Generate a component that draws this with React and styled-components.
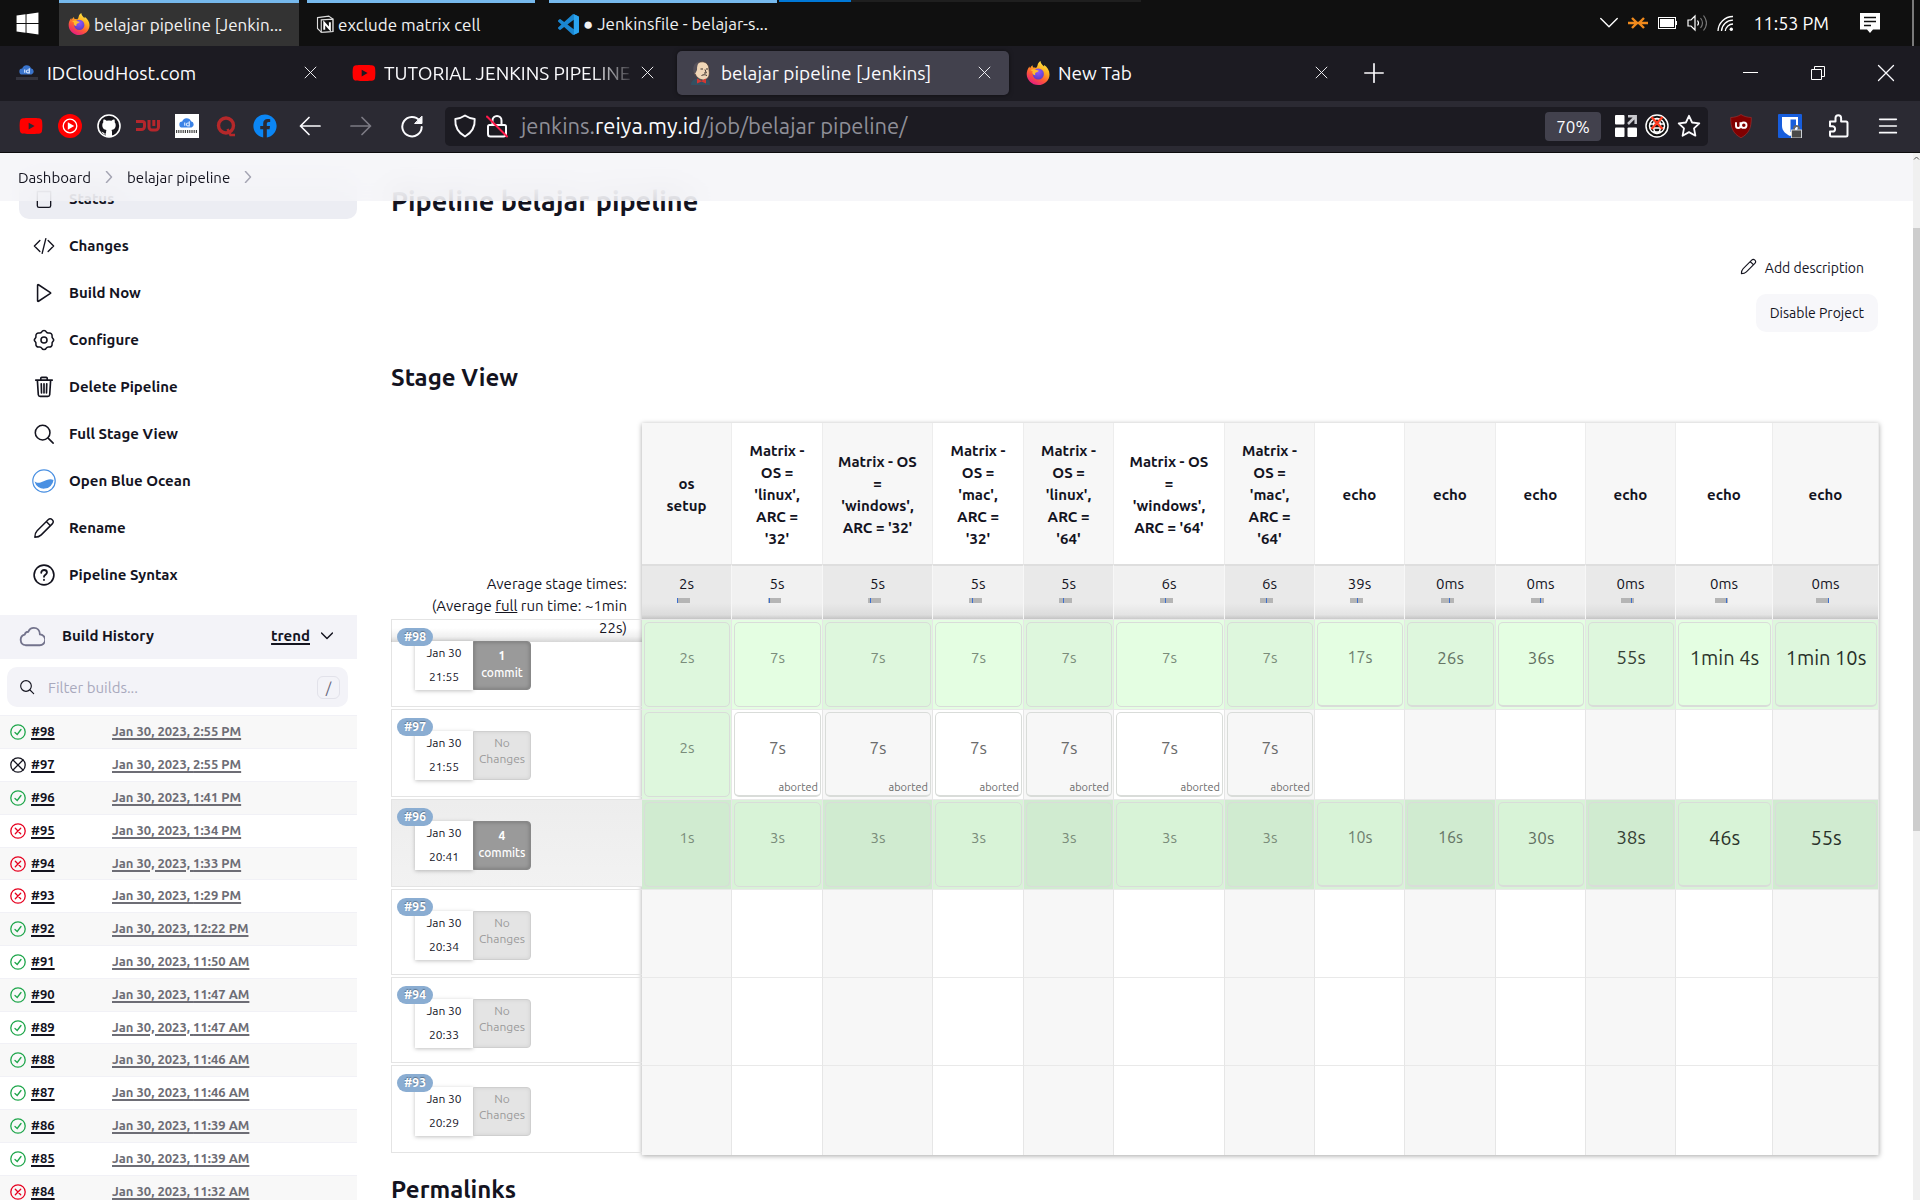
import React from 'react';
import styled, { createGlobalStyle, css } from 'styled-components';
import { FaWindows, FaYoutube, FaFacebook } from 'react-icons/fa';

const GlobalStyle = createGlobalStyle`
  * { box-sizing: border-box; }
  body {
    margin: 0;
    font-family: Ubuntu, "Noto Sans", "Open Sans", sans-serif;
    font-size: 15px;
    color: #14141f;
    background: #fff;
  }
  button { font: inherit; color: inherit; background: none; border: 0; padding: 0; cursor: pointer; }
  svg { display: block; flex: none; }
  h1, h2, ul { margin: 0; padding: 0; }
  ul { list-style: none; }
  a { color: inherit; text-decoration: none; }
`;

const Screen = styled.div`
  height: 100vh;
  display: flex;
  flex-direction: column;
  overflow: hidden;
`;

/* ---------- Desktop task bar ---------- */

const TaskBar = styled.div`
  display: flex;
  height: 46px;
  background: #101010;
  color: #fff;
  font-size: 17px;
`;
const StartButton = styled.button`
  width: 59px;
  display: grid;
  place-items: center;
  padding-right: 5px;
`;
const Task = styled.button`
  width: ${p => p.$width}px;
  margin-right: ${p => p.$gap}px;
  display: flex;
  align-items: center;
  gap: 4px;
  padding: 0 8px 1px 9px;
  border-top: 3px solid #76b9ed;
  background: ${p => (p.$active ? '#333' : 'transparent')};
  overflow: hidden;
  white-space: nowrap;
  color: #f2f2f2;
`;
const TaskProgress = styled.div`
  width: 362px;
  height: 2px;
  background: linear-gradient(to right, #0078d7 20%, #1f1f1f 20%);
`;
const Tray = styled.div`
  margin-left: auto;
  display: flex;
  align-items: center;
  gap: 10px;
  padding-right: 32px;
`;
const Clock = styled.span`
  margin: 0 21px 0 9px;
  font-size: 18px;
`;
const DesktopEdge = styled.div`
  width: 8px;
  border-left: 2px solid #7a7a7a;
`;

/* ---------- Browser chrome ---------- */

const TabStrip = styled.div`
  display: flex;
  align-items: center;
  height: 55px;
  gap: 5px;
  padding: 0 0 1px 3px;
  background: #1c1b22;
  color: #fbfbfe;
`;
const Tab = styled.div`
  width: 332px;
  height: 44px;
  display: flex;
  align-items: center;
  padding: 0 11px 1px 12px;
  border-radius: 5px;
  font-size: 19px;
  ${p => p.$active && css`
    background: #42414d;
    box-shadow: 0 0 4px rgba(0, 0, 0, 0.5);
  `}
`;
const TabTitle = styled.span`
  flex: 1;
  margin: 0 -4px 0 8px;
  overflow: hidden;
  white-space: nowrap;
  ${p => p.$fade && css`mask-image: linear-gradient(to left, transparent, #000 44px);`}
`;
const CloseButton = styled.button`
  width: 28px;
  height: 28px;
  display: grid;
  place-items: center;
`;
const NewTab = styled.button`
  width: 46px;
  height: 44px;
  display: grid;
  place-items: center;
`;
const WindowButtons = styled.div`
  margin-left: auto;
  display: flex;
`;
const WindowButton = styled.button`
  width: 68px;
  height: 44px;
  display: grid;
  place-items: center;
`;

const ToolBar = styled.div`
  display: flex;
  align-items: center;
  height: 52px;
  padding: 0 8px 1px 11px;
  background: #2b2a33;
  color: #fbfbfe;
  border-bottom: 1px solid #0c0c0d;
`;
const IconButton = styled.button`
  width: ${p => p.$width}px;
  height: 40px;
  display: grid;
  place-items: center;
`;
const UrlBar = styled.div`
  flex: 1;
  height: 39px;
  margin: 0 8px;
  display: flex;
  align-items: center;
  gap: 8px;
  padding: 0 7px 0 8px;
  border-radius: 5px;
  background: #1c1b22;
`;
const Address = styled.div`
  flex: 1;
  font-size: 22px;
  line-height: 30px;
  color: #8f8f98;
  white-space: nowrap;
  padding-left: 4px;
  b { font-weight: 400; color: #fbfbfe; }
`;
const ZoomLevel = styled.button`
  height: 29px;
  width: 56px;
  margin-right: 6px;
  border-radius: 4px;
  background: #42414d;
  font-size: 17px;
`;

/* ---------- Page ---------- */

const Viewport = styled.div`
  flex: 1;
  min-height: 0;
  display: flex;
`;
const Page = styled.div`
  flex: 1;
  min-width: 0;
  overflow: hidden;
`;
const ScrollBar = styled.div`
  width: 7px;
  background: #f0f0f0;
  display: flex;
  flex-direction: column;
`;
const ScrollArrow = styled.div`
  height: 75px;
  padding-top: 3px;
`;
const ScrollThumb = styled.div`
  height: 603px;
  background: #cdcdcd;
`;

const Breadcrumbs = styled.nav`
  position: sticky;
  top: 0;
  z-index: 5;
  display: flex;
  align-items: center;
  gap: 12px;
  height: 48px;
  padding: 0 18px;
  color: #14141f;
  background: rgba(244, 244, 247, 0.8);
  backdrop-filter: blur(15px);
  svg { color: #a5a5b3; }
`;
const Body = styled.div`
  display: grid;
  grid-template-columns: 357px minmax(0, 1fr);
  gap: 34px;
  margin-top: -23px;
  padding-right: 35px;
`;

const TaskList = styled.ul`
  padding-left: 19px;
  display: flex;
  flex-direction: column;
  gap: 6px;
`;
const TaskLink = styled.a`
  display: flex;
  align-items: center;
  gap: 13px;
  height: 41px;
  padding: 0 13px;
  border-radius: 10px;
  font-weight: 600;
  background: ${p => (p.$active ? '#ecedf3' : 'transparent')};
`;

const HistoryHeader = styled.div`
  display: flex;
  align-items: center;
  height: 44px;
  margin-top: 20px;
  padding: 0 24px 3px 19px;
  background: #f3f3f8;
  font-weight: 600;
  a { margin-left: auto; text-decoration: underline; text-decoration-thickness: 2px; text-underline-offset: 2px; }
`;
const HistoryTitle = styled.h2`
  font-size: 15px;
  font-weight: 600;
  margin-left: 17px;
`;
const TrendToggle = styled.button`
  margin-left: 11px;
`;
const Search = styled.label`
  display: flex;
  align-items: center;
  gap: 13px;
  height: 40px;
  margin: 8px 9px 8px 7px;
  padding: 0 8px 0 12px;
  border-radius: 10px;
  background: #f3f3f8;
  input {
    flex: 1;
    min-width: 0;
    border: 0;
    outline: 0;
    padding: 0;
    background: none;
    font: inherit;
  }
  input::placeholder { color: #a9a9bd; opacity: 1; }
`;
const Key = styled.kbd`
  width: 23px;
  height: 23px;
  display: grid;
  place-items: center;
  border: 1px solid #e2e2ea;
  border-radius: 6px;
  font: inherit;
  color: #66667a;
`;

const BuildTable = styled.table`
  width: 100%;
  border-collapse: collapse;
`;
const BuildRow = styled.tr`
  height: 33px;
  border-top: 1px solid #f1f1f6;
  &:nth-child(odd) { background: #f8f8f8; }
  &:nth-child(5n) { height: 32px; }
`;
const BuildCell = styled.td`
  padding: 0 0 0 ${p => p.$indent}px;
  width: ${p => p.$width};
  font-size: 13px;
  line-height: 18px;
  color: ${p => p.$color};
  a {
    display: inline-block;
    padding-bottom: 2px;
    font-weight: ${p => p.$weight};
    text-decoration: underline;
    text-decoration-thickness: 2px;
    text-underline-offset: 2px;
  }
`;
const BuildName = styled.div`
  display: flex;
  align-items: center;
  gap: 5px;
`;

const Title = styled.h1`
  font-size: 27px;
  line-height: 46px;
  font-weight: 700;
`;
const Actions = styled.div`
  display: flex;
  flex-direction: column;
  align-items: flex-end;
  gap: 16px;
  margin-top: 34px;
`;
const AddDescription = styled.a`
  display: flex;
  align-items: center;
  gap: 8px;
  height: 20px;
  padding-right: 14px;
  font-size: 14px;
  svg { margin-bottom: 4px; }
`;
const DisableButton = styled.button`
  height: 38px;
  padding: 0 14px;
  border-radius: 10px;
  background: #f7f7fa;
  font-size: 14px;
`;
const Heading = styled.h2`
  font-size: 24px;
  line-height: 30px;
  font-weight: 700;
  margin-top: ${p => p.$top}px;
`;

const StageView = styled.section`
  display: grid;
  grid-template-columns: 251px minmax(0, 1fr);
  margin-top: 30px;
`;
const RunColumn = styled.div`
  position: relative;
`;
const AverageLabel = styled.div`
  position: absolute;
  top: 141px;
  left: 0;
  right: 0;
  height: 78px;
  padding: 9px 15px 0 32px;
  text-align: right;
  line-height: 22px;
  background: linear-gradient(to bottom, transparent 82%, rgba(0, 0, 0, 0.06) 93%, rgba(0, 0, 0, 0.16));
`;
const RunList = styled.ul`
  margin-top: 196px;
`;
const Run = styled.li`
  height: ${p => p.$height - 2}px;
  margin-bottom: 2px;
  padding: 8px 0 0 5px;
  border: 1px solid #e4e4e4;
  border-right: 0;
  background: ${p => (p.$hover ? 'linear-gradient(#ededed, #f2f2f2)' : 'transparent')};
`;
const Badge = styled.a`
  position: relative;
  z-index: 2;
  display: block;
  width: 36px;
  height: 18px;
  border-radius: 9px;
  background: #8aadd2;
  color: #fff;
  font-size: 12px;
  font-weight: 700;
  line-height: 18px;
  text-align: center;
  text-shadow: 0 -1px 1px rgba(0, 0, 0, 0.35);
`;
const RunInfo = styled.div`
  position: relative;
  z-index: 1;
  display: flex;
  width: 116px;
  height: 49px;
  margin: -5px 0 0 18px;
`;
const RunDate = styled.div`
  width: 58px;
  line-height: 24px;
  font-size: 12px;
  text-align: center;
  background: #fff;
  box-shadow: 0 1px 4px rgba(0, 0, 0, 0.25);
`;
const Commits = styled.div`
  width: 58px;
  padding-top: 5px;
  border-radius: 0 4px 4px 0;
  font-size: 12px;
  line-height: 17px;
  text-align: center;
  color: ${p => (p.$filled ? '#fff' : '#9b9b9b')};
  font-weight: ${p => (p.$filled ? 500 : 400)};
  background: ${p => (p.$filled ? '#9a9a9a' : '#e4e4e4')};
  border: 1px solid ${p => (p.$filled ? '#888' : '#cfcfcf')};
  box-shadow: inset 0 0 4px rgba(0, 0, 0, ${p => (p.$filled ? 0.25 : 0.08)});
  ${p => !p.$filled && css`padding-top: 3px; line-height: 16px;`}
`;

const StageTable = styled.table`
  width: 100%;
  table-layout: fixed;
  border-collapse: separate;
  border-spacing: 0;
  text-align: center;
  box-shadow: 0 1px 5px rgba(0, 0, 0, 0.35);
`;
const StageHead = styled.th`
  height: 141px;
  padding: 2px 0 0;
  line-height: 22px;
  font-weight: 700;
  white-space: pre-line;
  border-right: 1px solid #ededed;
  background: #fff;
  &:nth-child(odd) { background: #f7f7f7; }
`;
const Average = styled.td`
  height: 55px;
  padding: 8px 0 0;
  vertical-align: top;
  line-height: 20px;
  border-top: 2px solid #dedede;
  border-right: 1px solid #f7f7f7;
  background: linear-gradient(to bottom, #f1f1f1 70%, #e4e4e4 92%, #c9c9c9);
  &:nth-child(odd) { background: linear-gradient(to bottom, #e9e9e9 70%, #dcdcdc 92%, #c4c4c4); }
  svg { margin: 4px auto 0; transform: translateX(-3px); }
`;
const tones = {
  success: ['#e4fee2', '#def7dd'],
  hovered: ['#d8f3d7', '#d0ebd0'],
  plain: ['#ffffff', '#f7f7f7'],
};
const StageCell = styled.td`
  height: ${p => p.$height}px;
  padding: 2px 1px 2px 2px;
  border-top: 1px solid #e9e9e9;
  border-right: 1px solid #e6e6e6;
  background: ${p => tones[p.$tone][0]};
  &:nth-child(odd) { background: ${p => tones[p.$tone][1]}; }
`;
const StageBox = styled.div`
  height: 85px;
  display: flex;
  flex-direction: column;
  justify-content: center;
  position: relative;
  padding-bottom: 14px;
  border: 1px solid #d9dcd9;
  border-bottom-width: ${p => (p.$size > 15 ? 2 : 1)}px;
  border-radius: 5px;
  white-space: nowrap;
  font-size: ${p => p.$size}px;
  color: ${p => p.$color};
`;
const Aborted = styled.span`
  position: absolute;
  right: 2px;
  bottom: 0;
  font-size: 11px;
  line-height: 15px;
`;

/* ---------- Icons ---------- */

const Line = ({ size = 20, w = 1.6, box = 24, children }) => (
  <svg width={size} height={size} viewBox={`0 0 ${box} ${box}`} fill="none" stroke="currentColor"
    strokeWidth={w} strokeLinecap="round" strokeLinejoin="round" aria-hidden="true">{children}</svg>
);

const Firefox = ({ size = 22, id }) => (
  <svg width={size} height={size} viewBox="0 0 24 24" aria-hidden="true">
    <defs>
      <linearGradient id={`${id}a`} x1="0.8" y1="0" x2="0.25" y2="1">
        <stop offset="0" stopColor="#fff44f" /><stop offset="0.35" stopColor="#ffb020" />
        <stop offset="0.65" stopColor="#ff5a36" /><stop offset="1" stopColor="#e31587" />
      </linearGradient>
      <radialGradient id={`${id}b`} cx="0.5" cy="0.3" r="0.7">
        <stop offset="0" stopColor="#9059ff" /><stop offset="1" stopColor="#5b3bc4" />
      </radialGradient>
    </defs>
    <path fill={`url(#${id}a)`} d="M14.5 0c.2 2.600 1.700 3.800 3.600 5.600 0-.600 0-1 .1-1.500 3.100 2 5.300 5.600 5.300 9.300C23.500 19.400 18.500 24 12.200 24 5.700 24 .7 19 .7 13c0-3 1.100-5.600 2.900-7.600 0 .800.100 1.400.400 1.900.6-1.200 1.400-2.200 2.500-3 0 1 .3 1.800.8 2.300.9-.100 1.900 0 2.700.4 1-1 1.500-1.900 1.600-3C12 2.200 13 .9 14.500 0z" />
    <circle cx="12.300" cy="13" r="5.600" fill={`url(#${id}b)`} />
    <path fill="#ffbd2e" d="M4.500 9.300c1.500-1.200 3.600-1.500 5.300-.500.7.4 1.700.7 2.900.7-.2 1.400-1.900 1.600-2.700 2.100-.9.500-1.200 1.500-.6 2.700-2.800-.3-3.500-2.700-2.700-4-.8-.5-1.500-.7-2.200-1z" />
  </svg>
);
const Notion = () => (
  <svg width="18" height="18" viewBox="0 0 24 24" aria-hidden="true">
    <path fill="none" stroke="#ddd" strokeWidth="1.500" d="M2 3.500 17 1.500l5.500 4V22L7 23 2 18z" />
    <path fill="#101010" stroke="#ddd" strokeWidth="1.500" d="M7 6.500 22.500 5.500V22L7 23z" />
    <path fill="none" stroke="#fff" strokeWidth="2.600" d="M11 19.500V10.500l7.500 8.500V9.500" />
  </svg>
);
const VsCode = () => (
  <svg width="21" height="21" viewBox="0 0 24 24" aria-hidden="true">
    <path fill="#1a86d0" d="M23.150 2.587L18.210.21a1.494 1.494 0 0 0-1.705.29l-9.460 8.630-4.120-3.128a.999.999 0 0 0-1.276.057L.327 7.261A1 1 0 0 0 .326 8.740L3.899 12 .326 15.260a1 1 0 0 0 .001 1.479L1.650 17.940a.999.999 0 0 0 1.276.057l4.120-3.128 9.460 8.630a1.492 1.492 0 0 0 1.704.290l4.942-2.377A1.500 1.500 0 0 0 24 20.060V3.939a1.500 1.500 0 0 0-.850-1.352zm-5.146 14.861L10.826 12l7.178-5.448v10.896z" />
    <path fill="#2aa4f0" d="M18.200.2 23.150 2.590A1.500 1.500 0 0 1 24 3.940v16.120c0 .580-.330 1.100-.850 1.350l-4.950 2.380z" />
  </svg>
);
const CloudFavicon = ({ tile }) => (
  <svg width="24" height="24" viewBox="0 0 24 24" aria-hidden="true">
    {tile && <rect width="24" height="24" fill="#fff" />}
    <path fill={tile ? '#3b82e6' : '#3a74cc'} d="M7.500 13.500a3 3 0 0 1-.3-6A4.600 4.600 0 0 1 16 7.300a3.200 3.200 0 0 1 .5 6.200z" />
    <path stroke="#cfe2ff" strokeWidth="1.200" fill="none" d="M9.700 8.500v3.300M14.300 7.300v4.500h-1.500a1.300 1.300 0 0 1 0-2.800h1.500" />
    <path stroke={tile ? '#444' : '#34343e'} strokeWidth="3" strokeDasharray={tile ? '1.200 1' : undefined} d="M1 17.500h22" />
  </svg>
);
const Butler = () => (
  <svg width="24" height="24" viewBox="0 0 22 24" aria-hidden="true">
    <path fill="#335061" d="M1 24c0-4 2-5.500 6-6.500h8c4 1 5 3 5 6.500z" />
    <path fill="#f0d6b7" stroke="#4a3a34" strokeWidth=".8" d="M5 8c0-4 3-7.200 7.200-7.200S19 4 19 8.500c0 1.500.5 2.500.3 4.500-.3 3.500-3 6-6 6S6 16 5.600 13.500C3.600 13 3.500 10 5 8z" />
    <path fill="#55505a" d="M3.500 11C2.500 5 5 1 10 .6 7.500 2.500 7 5 7 9l-2 4z" />
    <path fill="none" stroke="#3a302c" strokeWidth="1" d="M10.500 8h2.500M16 8h2M15 8.500l1.300 3.500H14M11.500 14.500c2-1 3.500-1 5.500 0" />
    <path fill="#d33833" d="m7 17.500 4.500 2.200 4.500-2.200v5l-4.500-2-4.500 2z" />
  </svg>
);
const MusicIcon = () => (
  <svg width="24" height="24" viewBox="0 0 24 24" aria-hidden="true">
    <circle cx="12" cy="12" r="12" fill="#f00" />
    <circle cx="12" cy="12" r="6.800" fill="none" stroke="#fff" strokeWidth="1.300" />
    <path fill="#fff" d="m9.800 8.200 6.400 3.800-6.400 3.800z" />
  </svg>
);
const OctoIcon = () => (
  <svg width="24" height="24" viewBox="0 0 24 24" aria-hidden="true">
    <circle cx="12" cy="12" r="11" fill="#17161c" stroke="#fff" strokeWidth="1.600" />
    <path fill="#fff" d="M6.500 5.500c1.200 0 2.300.6 3 1.200a11 11 0 0 1 5 0c.7-.6 1.800-1.200 3-1.200.4 1 .4 2 .2 2.700.7.8 1 1.800 1 2.800 0 3.500-2 4.600-4.200 5 .4.500.5 1.200.5 2v4.700H9v-2.200c-2.200.4-3-.5-3.600-1.700-.3-.5-.7-.8-1-1 1.500-.3 2 .8 2.600 1.500.6.500 1.300.4 2 .2 0-1.300.1-2.900.5-3.500C7.300 15.600 5.300 14.500 5.300 11c0-1 .3-2 1-2.800-.2-.7-.2-1.700.2-2.700z" />
  </svg>
);
const CurvesIcon = () => (
  <svg width="24" height="14" viewBox="0 0 24 14" fill="none" stroke="#b5262c" strokeWidth="3" aria-hidden="true">
    <path d="M0 2.500h6.500a2 2 0 0 1 2 2v3a3 3 0 0 1-3 3H0M13 1v7a3 3 0 0 0 3 3h3.500a3 3 0 0 0 3-3V1M17.800 1v6" />
  </svg>
);
const RingIcon = () => (
  <svg width="24" height="24" viewBox="0 0 24 24" fill="none" stroke="#b5282a" strokeWidth="3.400" aria-hidden="true">
    <circle cx="12" cy="11.500" r="7.500" /><path d="m13.500 15 3 6H21" strokeWidth="2.500" />
  </svg>
);
const BackArrow = () => <Line size={24} w={1.700}><path d="M22 12H2.500M11 3.500 2.500 12l8.500 8.500" /></Line>;
const ForwardArrow = () => <Line size={24} w={1.700}><path stroke="#7c7b84" d="M2 12h19.500M13 3.500l8.500 8.500-8.500 8.500" /></Line>;
const Reload = () => (
  <Line size={24} w={2}>
    <path d="M19.500 6.500A9.700 9.700 0 1 0 21.700 13" /><path fill="currentColor" strokeWidth="1" d="M22 2.500v7h-7z" />
  </Line>
);
const Shield = () => <Line size={24} w={1.900}><path d="M12 1.500c3 2 6 3.300 9.700 3.500.5 8-2.700 13.500-9.700 17.500C5 18.500 1.800 13 2.300 5 6 4.800 9 3.500 12 1.500z" /></Line>;
const BrokenLock = () => (
  <Line size={24} w={2}>
    <path d="M7.500 11V6.500a4.500 4.500 0 0 1 9 0V11M8 11h11.500a1.500 1.500 0 0 1 1.500 1.500V20a2.500 2.500 0 0 1-2.500 2.500h-13A2.500 2.500 0 0 1 3 20v-7.500A1.500 1.500 0 0 1 4.500 11z" />
    <path stroke="#ff1a4b" d="m2 2.500 20 20" />
  </Line>
);
const Apps = () => (
  <svg width="22" height="22" viewBox="0 0 22 22" aria-hidden="true">
    <g fill="#fff"><rect width="9.500" height="9.500" rx="1" /><rect y="12.500" width="9.500" height="9.500" rx="1" /><rect x="12.500" y="12.500" width="9.500" height="9.500" rx="1" /></g>
    <path fill="none" stroke="#c9c9ce" strokeWidth="2.500" d="M13 1.300h7.700V9M20.500 1.500 13 9" />
  </svg>
);
const GlobeOff = () => (
  <svg width="24" height="24" viewBox="0 0 24 24" fill="none" stroke="#fff" strokeWidth="1.500" aria-hidden="true">
    <circle cx="12" cy="12" r="11" fill="#111" /><circle cx="12" cy="12" r="7.500" /><ellipse cx="12" cy="12" rx="3.500" ry="7.500" /><path d="M5 10h14M5 14h14M8 18h8" />
    <path stroke="#ff3b1f" strokeWidth="2.300" d="m6.500 3 11 12M17.500 3l-11 12" />
  </svg>
);
const Star = () => <Line size={24} w={1.800}><path d="m12 1.800 3.100 6.700 7.200.9-5.300 5 1.400 7.300-6.400-3.600-6.400 3.600L7 14.400l-5.300-5 7.200-.9z" /></Line>;
const Guard = () => (
  <svg width="24" height="24" viewBox="0 0 24 24" aria-hidden="true">
    <path fill="#800000" stroke="#a33" strokeWidth=".6" d="M12 .5c3 2 6.500 2.800 10.300 3 0 10-2 16-10.300 20.300C3.700 19.500 1.700 13.500 1.700 3.500 5.500 3.300 9 2.500 12 .5z" />
    <path fill="none" stroke="#fff" strokeWidth="1.900" d="M7 8.300v3.500a2.200 2.200 0 0 0 4.500 0V8.300" /><circle cx="14.800" cy="11.200" r="2.700" fill="none" stroke="#fff" strokeWidth="1.900" />
  </svg>
);
const Vault = () => (
  <svg width="24" height="24" viewBox="0 0 24 24" aria-hidden="true">
    <rect width="24" height="24" rx="1" fill="#175ddc" />
    <path fill="#fff" d="M4 3h16v9c0 5-4 8-8 10-4-2-8-5-8-10z" /><path fill="#175ddc" d="M12.500 5.500H18V12c0 2-2 4.500-5.500 6z" />
    <path fill="none" stroke="#666" strokeWidth="1.800" d="M16 16v-1.500a2.500 2.500 0 0 1 5 0V16" /><rect x="13.500" y="16" width="10" height="8" fill="#4a4a4a" stroke="#ddd" strokeWidth=".9" />
  </svg>
);
const Puzzle = () => <Line size={24} w={2}><path d="M3 7.500h5.500V4a2.800 2.800 0 0 1 5.600 0v3.500H19a1.500 1.500 0 0 1 1.500 1.500v12a1.500 1.500 0 0 1-1.500 1.500H4.500A1.500 1.500 0 0 1 3 21v-3.500h2.500a2.600 2.600 0 0 0 0-5.200H3z" /></Line>;
const Menu = () => <Line size={20} w={2}><path d="M2 4h20M2 12h20M2 20h20" /></Line>;
const Cross = ({ size }) => <Line size={size} w={1.700}><path d="m2 2 20 20M22 2 2 22" /></Line>;
const Chevron = ({ size = 12, w = 3, down }) => <Line size={size} w={w}><path d={down ? 'm1 6 11 11L23 6' : 'm7 1 10 11L7 23'} /></Line>;

const Doc = () => <Line><path d="M4 3h16v17a2 2 0 0 1-2 2H6a2 2 0 0 1-2-2z" /></Line>;
const Code = () => <Line size={22} w={1.500}><path d="M7.500 6 1.500 12l6 6M16.500 6l6 6-6 6M14 4l-4 16" /></Line>;
const Play = () => <Line size={22} w={1.700}><path d="M5 3.500v17a.6.6 0 0 0 1 .5l13-8.500a.6.6 0 0 0 0-1L6 3a.6.6 0 0 0-1 .5z" /></Line>;
const Gear = () => (
  <Line size={22} w={1.700}>
    <circle cx="12" cy="12" r="3.300" />
    <path d="M9.500 3.200a2.800 2.800 0 0 1 5 0c.6 1 1.600 1.400 2.700 1.200 2.300-.4 4 1.200 3.600 3.400-.2 1.200.2 2 1 2.700 1 .9 1 2.100 0 3-.8.700-1.200 1.600-1 2.700.4 2.300-1.300 3.800-3.600 3.400-1.100-.2-2.100.2-2.700 1.200a2.800 2.800 0 0 1-5 0c-.6-1-1.600-1.400-2.700-1.200-2.300.4-4-1.100-3.600-3.400.2-1.100-.2-2-1-2.700-1-.9-1-2.100 0-3 .8-.7 1.200-1.500 1-2.700-.4-2.200 1.300-3.800 3.600-3.400 1.100.2 2.100-.2 2.700-1.200z" />
  </Line>
);
const Trash = () => <Line size={22} w={1.800}><path d="M3 4.500h18M8.500 4V2.500A1 1 0 0 1 9.500 1.500h5a1 1 0 0 1 1 1V4M4.800 5l1 15.500a2 2 0 0 0 2 1.800h8.400a2 2 0 0 0 2-1.800L19.200 5M9 8.500l.3 10M12 8.500v10M15 8.500l-.3 10" /></Line>;
const Lens = ({ size = 22 }) => <Line size={size} w={1.700}><circle cx="10.500" cy="10.500" r="8" /><path d="m16.500 16.500 5.500 5.500" /></Line>;
const Ocean = () => (
  <svg width="24" height="24" viewBox="0 0 24 24" aria-hidden="true">
    <circle cx="12" cy="12" r="11.200" fill="none" stroke="#4a90e2" strokeWidth="1.200" />
    <path fill="#4a90e2" d="M2.500 12.500c3 2 5 1.500 8.500 0s7-3.500 10.500-1.500a9.700 9.700 0 0 1-19 1.500z" />
  </svg>
);
const Pencil = ({ size = 22 }) => <Line size={size} w={1.600}><path d="M2 22c0-3.500 1-5.500 2.500-7L16.500 3a3.100 3.100 0 0 1 4.500 4.500l-12 12C7.500 21 5.500 22 2 22zM14.500 5l4.500 4.500" /></Line>;
const Question = () => <Line size={22} w={1.800}><circle cx="12" cy="12" r="10.800" /><path d="M9 9.500c0-4 6.200-3.700 6.200-.2 0 2.500-3.200 2.400-3.200 4.700M12 17.200v.3" strokeWidth="2" /></Line>;
const Cloud = () => <Line size={26} w={1.700}><g stroke="#73738c"><path d="M6 20.500a5 5 0 0 1-.7-9.800c.4-1.700 1.700-2.600 3.200-2.600 1-2.300 2.900-3.600 5.200-3.600 3.200 0 5.600 2.500 5.600 6a5 5 0 0 1-.3 10z" /></g></Line>;

const statusColors = { ok: '#1ea64b', failed: '#e6001f', aborted: '#14141f' };
const StatusIcon = ({ status }) => (
  <svg width="16" height="16" viewBox="0 0 16 16" fill="none" stroke={statusColors[status]} strokeWidth="1.300" strokeLinecap="round" aria-hidden="true">
    <circle cx="8" cy="8" r="7.200" />
    {status === 'ok' && <path d="m5 8.500 2.200 2L11 5.500" />}
    {status === 'failed' && <path d="m5.300 5.300 5.400 5.400M10.700 5.300l-5.400 5.400" />}
    {status === 'aborted' && <path d="m3 3 10 10M13 3 3 13" />}
  </svg>
);

/* ---------- Data ---------- */

const sideTasks = [
  ['Status', Doc], ['Changes', Code], ['Build Now', Play], ['Configure', Gear], ['Delete Pipeline', Trash],
  ['Full Stage View', Lens], ['Open Blue Ocean', Ocean], ['Rename', Pencil], ['Pipeline Syntax', Question],
];
const builds = [
  [98, '2:55 PM', 'ok'], [97, '2:55 PM', 'aborted'], [96, '1:41 PM', 'ok'], [95, '1:34 PM', 'failed'],
  [94, '1:33 PM', 'failed'], [93, '1:29 PM', 'failed'], [92, '12:22 PM', 'ok'], [91, '11:50 AM', 'ok'],
  [90, '11:47 AM', 'ok'], [89, '11:47 AM', 'ok'], [88, '11:46 AM', 'ok'], [87, '11:46 AM', 'ok'],
  [86, '11:39 AM', 'ok'], [85, '11:39 AM', 'ok'], [84, '11:32 AM', 'failed'],
];
const stages = [
  ['os\nsetup', '2s', 90], ["Matrix -\nOS =\n'linux',\nARC =\n'32'", '5s', 91], ["Matrix - OS\n=\n'windows',\nARC = '32'", '5s', 110],
  ["Matrix -\nOS =\n'mac',\nARC =\n'32'", '5s', 91], ["Matrix -\nOS =\n'linux',\nARC =\n'64'", '5s', 90], ["Matrix - OS\n=\n'windows',\nARC = '64'", '6s', 111],
  ["Matrix -\nOS =\n'mac',\nARC =\n'64'", '6s', 90], ['echo', '39s', 90], ['echo', '0ms', 91], ['echo', '0ms', 90],
  ['echo', '0ms', 90], ['echo', '0ms', 97], ['echo', '0ms', 106],
];
const sizes98 = [15, 15, 15, 15, 15, 15, 15, 16, 17, 17, 19, 20, 20];
const sizes96 = [15, 15, 15, 15, 15, 15, 15, 16, 16, 17, 19, 20, 20];
const shade = ['#7a8c7a', '#7a8c7a', '#7a8c7a', '#7a8c7a', '#7a8c7a', '#7a8c7a', '#7a8c7a', '#6f7f6f', '#667566', '#5f6e5f', '#354035', '#2c352c', '#283028'];
const runs = [
  { id: 98, time: '21:55', commits: 1, height: 90, tone: 'success', sizes: sizes98, cells: ['2s', '7s', '7s', '7s', '7s', '7s', '7s', '17s', '26s', '36s', '55s', '1min 4s', '1min 10s'] },
  { id: 97, time: '21:55', commits: 0, height: 90, tone: 'aborted', sizes: [15, 17, 17, 17, 17, 17, 17], cells: ['2s', '7s', '7s', '7s', '7s', '7s', '7s'] },
  { id: 96, time: '20:41', commits: 4, height: 90, tone: 'hovered', sizes: sizes96, cells: ['1s', '3s', '3s', '3s', '3s', '3s', '3s', '10s', '16s', '30s', '38s', '46s', '55s'] },
  { id: 95, time: '20:34', commits: 0, height: 88, cells: [] },
  { id: 94, time: '20:33', commits: 0, height: 88, cells: [] },
  { id: 93, time: '20:29', commits: 0, height: 90, cells: [] },
];

const bookmarks = [
  ['YouTube', <FaYoutube size={24} color="#f00" key="i" />], ['YouTube Music', <MusicIcon key="i" />],
  ['GitHub', <OctoIcon key="i" />], ['Curves', <CurvesIcon key="i" />],
  ['CloudHost', <CloudFavicon tile key="i" />], ['Ring', <RingIcon key="i" />],
  ['Facebook', <FaFacebook size={24} color="#0b86f5" key="i" />],
];
const tabs = [
  ['IDCloudHost.com', <CloudFavicon key="i" />], ['TUTORIAL JENKINS PIPELINE', <FaYoutube size={24} color="#f00" key="i" />, 'fade'],
  ['belajar pipeline [Jenkins]', <Butler key="i" />, 'active'], ['New Tab', <Firefox id="tab" size={24} key="i" />],
];

/* ---------- Sections ---------- */

const Desktop = () => (
  <TaskBar>
    <StartButton aria-label="Start"><FaWindows size={25} /></StartButton>
    <Task $width={240} $gap={8} $active><Firefox id="task" size={22} />belajar pipeline [Jenkin...</Task>
    <Task $width={228} $gap={14}><Notion />exclude matrix cell</Task>
    <Task $width={228} $gap={2}><VsCode />● Jenkinsfile - belajar-s...</Task>
    <TaskProgress />
    <Tray>
      <Chevron size={18} w={1.800} down />
      <svg width="20" height="16" viewBox="0 0 20 16" fill="none" stroke="#f08a1c" strokeWidth="2.400" aria-hidden="true"><path d="M0 8h20M4 3l5 5-5 5M16 3l-5 5 5 5" /></svg>
      <svg width="19" height="12" viewBox="0 0 19 12" aria-hidden="true"><rect x=".5" y=".5" width="17" height="11" fill="none" stroke="#fff" /><path fill="#fff" d="M2 2h14v8H2zM18 4h1v4h-1z" /></svg>
      <svg width="20" height="18" viewBox="0 0 20 18" fill="none" stroke="#fff" strokeWidth="1.200" aria-hidden="true"><path d="M1 6h3l4-4v14l-4-4H1zM10.500 6.500q2 2.500 0 5" /><path stroke="#777" d="M13.500 4q4 5 0 10M16.500 1.500q6 7.500 0 15" /></svg>
      <svg width="17" height="17" viewBox="0 0 17 17" fill="none" stroke="#fff" strokeWidth="1.300" aria-hidden="true"><path d="M1 16A15 15 0 0 1 16 1.500M4.500 16A11.500 11.500 0 0 1 16 5.200M8.300 16A8 8 0 0 1 16 9" /><circle cx="14.300" cy="14.300" r="1.700" fill="#fff" stroke="none" /></svg>
      <Clock>11:53 PM</Clock>
      <svg width="20" height="20" viewBox="0 0 20 20" aria-hidden="true"><path fill="#fff" d="M0 0h20v16.500h-7L10 20l-3-3.500H0z" /><path stroke="#101010" strokeWidth="1.300" d="M4 4.500h12M4 8.500h12M4 12.500h7" /></svg>
    </Tray>
    <DesktopEdge />
  </TaskBar>
);

const Browser = () => (
  <>
    <TabStrip>
      {tabs.map(([title, icon, state]) => (
        <Tab key={title} $active={state === 'active'}>
          {icon}
          <TabTitle $fade={state === 'fade'}>{title}</TabTitle>
          <CloseButton aria-label="Close tab"><Cross size={13} /></CloseButton>
        </Tab>
      ))}
      <NewTab aria-label="New tab"><Line size={20} w={2}><path d="M12 1v22M1 12h22" /></Line></NewTab>
      <WindowButtons>
        <WindowButton aria-label="Minimize"><svg width="15" height="2" aria-hidden="true"><rect width="15" height="1" fill="#fff" /></svg></WindowButton>
        <WindowButton aria-label="Restore"><svg width="14" height="14" viewBox="0 0 14 14" fill="none" stroke="#fff" aria-hidden="true"><path d="M.5 3.500h10v10H.5zM3.500 3.500v-3h10v10h-3" /></svg></WindowButton>
        <WindowButton aria-label="Close"><Cross size={18} /></WindowButton>
      </WindowButtons>
    </TabStrip>
    <ToolBar>
      {bookmarks.map(([name, icon]) => <IconButton key={name} $width={39} aria-label={name}>{icon}</IconButton>)}
      <IconButton $width={51} aria-label="Back"><BackArrow /></IconButton>
      <IconButton $width={51} aria-label="Forward"><ForwardArrow /></IconButton>
      <IconButton $width={51} aria-label="Reload"><Reload /></IconButton>
      <UrlBar>
        <Shield /><BrokenLock />
        <Address>jenkins.<b>reiya.my.id</b>/job/belajar pipeline/</Address>
        <ZoomLevel>70%</ZoomLevel>
        <Apps /><GlobeOff /><Star />
      </UrlBar>
      <IconButton $width={49} aria-label="Content blocker"><Guard /></IconButton>
      <IconButton $width={49} aria-label="Password vault"><Vault /></IconButton>
      <IconButton $width={49} aria-label="Extensions"><Puzzle /></IconButton>
      <IconButton $width={49} aria-label="Menu"><Menu /></IconButton>
    </ToolBar>
  </>
);

const IconSlot = styled.span`
  width: 24px;
  display: grid;
  place-items: center;
`;

const Sidebar = () => (
  <aside>
    <TaskList>
      {sideTasks.map(([name, Icon], i) => (
        <li key={name}><TaskLink href="#" $active={i === 0}><IconSlot><Icon /></IconSlot>{name}</TaskLink></li>
      ))}
    </TaskList>
    <HistoryHeader>
      <Cloud />
      <HistoryTitle>Build History</HistoryTitle>
      <a href="#">trend</a>
      <TrendToggle aria-label="Toggle build history"><Chevron w={3} down /></TrendToggle>
    </HistoryHeader>
    <Search>
      <Lens size={16} />
      <input type="text" placeholder="Filter builds..." aria-label="Filter builds" />
      <Key>/</Key>
    </Search>
    <BuildTable>
      <tbody>
        {builds.map(([id, time, status]) => (
          <BuildRow key={id}>
            <BuildCell $indent={10} $width="112px" $weight={700} $color="#14141f">
              <BuildName><StatusIcon status={status} /><a href="#">#{id}</a></BuildName>
            </BuildCell>
            <BuildCell $indent={0} $width="auto" $weight={600} $color="#6d6d75"><a href="#">Jan 30, 2023, {time}</a></BuildCell>
          </BuildRow>
        ))}
      </tbody>
    </BuildTable>
  </aside>
);

const Trend = ({ index }) => (
  <svg width="13" height="5" viewBox="0 0 13 5" aria-hidden="true">
    <rect width="13" height="5" fill="#b5b5b5" /><rect x={index} width="1" height="5" fill="#3b6fd0" />
  </svg>
);

const Stages = () => (
  <StageView>
    <RunColumn>
      <AverageLabel>Average stage times:<br />(Average <u>full</u> run time: ~1min<br />22s)</AverageLabel>
      <RunList>
        {runs.map(run => (
          <Run key={run.id} $height={run.height} $hover={run.tone === 'hovered'}>
            <Badge href="#">#{run.id}</Badge>
            <RunInfo>
              <RunDate>Jan 30<br />{run.time}</RunDate>
              <Commits $filled={run.commits > 0}>
                {run.commits > 0
                  ? <><b>{run.commits}</b><br />{run.commits > 1 ? 'commits' : 'commit'}</>
                  : <>No<br />Changes</>}
              </Commits>
            </RunInfo>
          </Run>
        ))}
      </RunList>
    </RunColumn>
    <StageTable>
      <colgroup>{stages.map((s, i) => <col key={i} width={s[2]} />)}</colgroup>
      <thead><tr>{stages.map((s, i) => <StageHead key={i} scope="col">{s[0]}</StageHead>)}</tr></thead>
      <tbody>
        <tr>{stages.map((s, i) => <Average key={i}>{s[1]}<Trend index={i} /></Average>)}</tr>
        {runs.map(run => (
          <tr key={run.id}>
            {stages.map((_, i) => {
              const value = run.cells[i];
              const aborted = run.tone === 'aborted' && i > 0;
              const tone = !value || aborted ? 'plain' : run.tone === 'hovered' ? 'hovered' : 'success';
              return (
                <StageCell key={i} $height={run.height} $tone={tone}>
                  {value && (
                    <StageBox $size={run.sizes[i]} $color={aborted ? '#6b6b6b' : shade[i]}>
                      {value}{aborted && <Aborted>aborted</Aborted>}
                    </StageBox>
                  )}
                </StageCell>
              );
            })}
          </tr>
        ))}
      </tbody>
    </StageTable>
  </StageView>
);

export default function App() {
  return (
    <Screen>
      <GlobalStyle />
      <Desktop />
      <Browser />
      <Viewport>
        <Page>
          <Breadcrumbs aria-label="Breadcrumb">
            <a href="#">Dashboard</a><Chevron w={3} /><a href="#">belajar pipeline</a><Chevron w={3} />
          </Breadcrumbs>
          <Body>
            <Sidebar />
            <main>
              <Title>Pipeline belajar pipeline</Title>
              <Actions>
                <AddDescription href="#"><Pencil size={17} />Add description</AddDescription>
                <DisableButton>Disable Project</DisableButton>
              </Actions>
              <Heading $top={31}>Stage View</Heading>
              <Stages />
              <Heading $top={20}>Permalinks</Heading>
            </main>
          </Body>
        </Page>
        <ScrollBar>
          <ScrollArrow><svg width="7" height="4" viewBox="0 0 7 4" fill="none" stroke="#555" aria-hidden="true"><path d="M1 3.500 3.500 1 6 3.500" /></svg></ScrollArrow>
          <ScrollThumb />
        </ScrollBar>
      </Viewport>
    </Screen>
  );
}
